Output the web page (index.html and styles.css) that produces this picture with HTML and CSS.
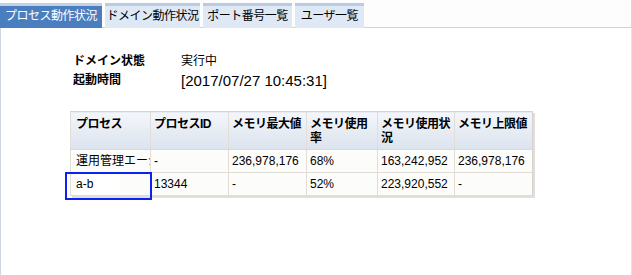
FILE: index.html
```html
<!DOCTYPE html>
<html lang="ja">
<head>
    <meta charset="UTF-8">
    <title>プロセス動作状況</title>
    <link rel="stylesheet" href="styles.css">
</head>
<body>
    <div class="frame">
        <div class="tabbar">
            <div class="tab tab-process active">プロセス動作状況</div>
            <div class="tab tab-domain">ドメイン動作状況</div>
            <div class="tab tab-port">ポート番号一覧</div>
            <div class="tab tab-user">ユーザ一覧</div>
        </div>

        <div class="panel">
            <div class="info">
                <div class="info-row">
                    <span class="info-label">ドメイン状態</span>
                    <span class="info-value">実行中</span>
                </div>
                <div class="info-row">
                    <span class="info-label">起動時間</span>
                    <span class="info-value date">[2017/07/27 10:45:31]</span>
                </div>
            </div>

            <table class="proc-table">
                <colgroup>
                    <col class="c1">
                    <col class="c2">
                    <col class="c3">
                    <col class="c4">
                    <col class="c5">
                    <col class="c6">
                </colgroup>
                <thead>
                    <tr>
                        <th class="first">プロセス</th>
                        <th>プロセスID</th>
                        <th>メモリ最大値</th>
                        <th>メモリ使用率</th>
                        <th>メモリ使用状況</th>
                        <th>メモリ上限値</th>
                    </tr>
                </thead>
                <tbody>
                    <tr>
                        <td class="first">運用管理エージェント</td>
                        <td>-</td>
                        <td>236,978,176</td>
                        <td>68%</td>
                        <td>163,242,952</td>
                        <td>236,978,176</td>
                    </tr>
                    <tr>
                        <td class="first focused"><span class="cell-box">a-b</span></td>
                        <td>13344</td>
                        <td>-</td>
                        <td>52%</td>
                        <td>223,920,552</td>
                        <td>-</td>
                    </tr>
                </tbody>
            </table>
        </div>
    </div>
</body>
</html>
```

FILE: styles.css
```css
html, body {
    margin: 0;
    padding: 0;
    background-color: #ffffff;
}
body {
    font-family: "Liberation Sans", "Noto Sans CJK JP", sans-serif;
    font-size: 12px;
    color: #000000;
}
.frame {
    width: 632px;
    height: 275px;
    box-sizing: border-box;
    display: flex;
    flex-direction: column;
}

/* tabs */
.tabbar {
    display: flex;
    gap: 3px;
    height: 29px;
    box-sizing: border-box;
    padding-top: 3px;
    border-top: 1px solid #e4e4e4;
    border-right: 1px solid #d8d8d8;
    border-bottom: 1px solid #d2d2d2;
    background-color: #fdfdfd;
    margin-top: -1px;
}
.tab {
    height: 25px;
    box-sizing: border-box;
    border-top: 3px solid #b9cce3;
    background-color: #dfe9f6;
    text-align: center;
    line-height: 21px;
    letter-spacing: -0.5px;
    white-space: nowrap;
}
.tab.active {
    background-color: #4b7ebe;
    border-top-color: #c3d2e6;
    color: #ffffff;
}
.tab-process { width: 102px; }
.tab-domain  { width: 95px; }
.tab-port    { width: 89px; }
.tab-user    { width: 69px; }

/* panel */
.panel {
    flex: 1;
    border-left: 1px solid #cfd6e1;
    border-right: 1px solid #dfe3ea;
    padding: 24px 0 0 69px;
}
.info {
    padding-left: 3px;
    margin-bottom: 21px;
}
.info-row {
    display: flex;
    height: 19px;
    line-height: 19px;
}
.info-label {
    width: 108px;
    font-weight: bold;
}
.date {
    font-size: 15px;
    line-height: 19px;
}

/* table */
.proc-table {
    border-collapse: collapse;
    table-layout: fixed;
    width: 462px;
    border: 1px solid #d6d3ce;
    box-shadow: 2px 2px 0 #e2dfda;
}
.c1 { width: 80px; }
.c2 { width: 78px; }
.c3 { width: 78px; }
.c4 { width: 71px; }
.c5 { width: 77px; }
.c6 { width: 78px; }
.proc-table th {
    height: 38px;
    box-sizing: border-box;
    padding: 5px 1px 0 3px;
    vertical-align: top;
    text-align: left;
    font-weight: bold;
    line-height: 14px;
    letter-spacing: -0.5px;
    border-left: 1px solid #e2ddd6;
    border-bottom: 1px solid #dcd8d2;
    background: linear-gradient(#f4f6fa, #dbe3ee);
}
.proc-table td {
    height: 22px;
    padding: 0 2px 0 3px;
    border-left: 1px solid #e2ddd6;
    border-bottom: 1px solid #dfdbd5;
    background-color: #fcfcfb;
    white-space: nowrap;
    overflow: hidden;
    line-height: 22px;
}
.proc-table .first {
    padding-left: 5px;
}
.proc-table td.focused {
    position: relative;
    overflow: visible;
}
.cell-box {
    display: inline-block;
    width: 44px;
    background-color: #ffffff;
}
.focused::after {
    content: "";
    position: absolute;
    left: -6px;
    top: -1px;
    right: -2px;
    bottom: -5px;
    border: 2px solid #0b22f0;
}
```
